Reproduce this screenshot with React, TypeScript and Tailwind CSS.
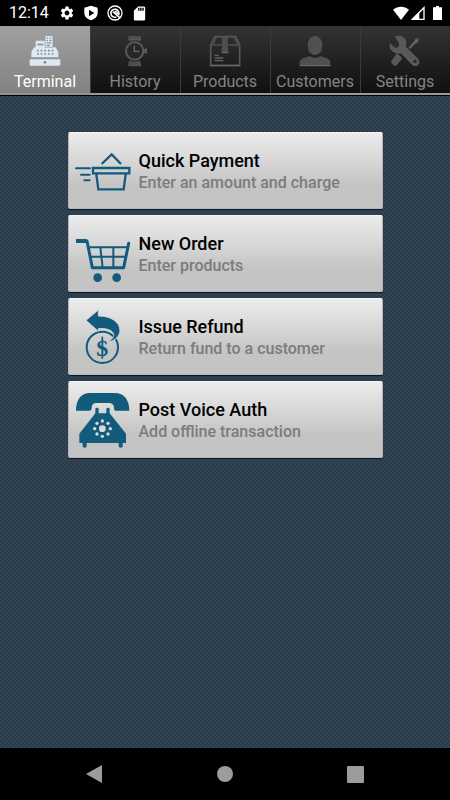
import { useState } from 'react';
import type { ReactNode } from 'react';
import { MdSdCard, MdSettings } from 'react-icons/md';

const TABS: { label: string; icon: ReactNode }[] = [
  { label: 'Terminal', icon: <RegisterIcon /> },
  { label: 'History', icon: <WatchIcon /> },
  { label: 'Products', icon: <BoxIcon /> },
  { label: 'Customers', icon: <PersonIcon /> },
  { label: 'Settings', icon: <ToolsIcon /> },
];

const ACTIONS: { title: string; text: string; icon: ReactNode }[] = [
  { title: 'Quick Payment', text: 'Enter an amount and charge', icon: <BasketIcon /> },
  { title: 'New Order', text: 'Enter products', icon: <CartIcon /> },
  { title: 'Issue Refund', text: 'Return fund to a customer', icon: <RefundIcon /> },
  { title: 'Post Voice Auth', text: 'Add offline transaction', icon: <PhoneIcon /> },
];

function RegisterIcon() {
  return (
    <svg viewBox="87 105 96 96" className="size-8 shrink-0" aria-hidden="true">
      <g fill="#dce8f3">
        <path d="M107 122h50v20h10l8 14v16H94v-16l8-14h5z" />
        <rect x="135" y="107" width="24" height="35" rx="2" stroke="#8e959b" strokeWidth="2" />
        <rect x="89" y="178" width="92" height="19" rx="3" />
      </g>
      <path d="M112 131h18v5h-18z" fill="#8b8f93" />
      <path d="M140 115h4m4 0h6M140 122h4m4 0h6M140 129h14M140 136h10" stroke="#7b8288" strokeWidth="3" />
      <path d="M111 152h49M111 162h49" stroke="#858b90" strokeWidth="5" strokeDasharray="5 6" />
      <circle cx="135" cy="187" r="4" fill="#7e858b" />
    </svg>
  );
}

function WatchIcon() {
  return (
    <svg viewBox="357 105 96 96" className="size-8 shrink-0" aria-hidden="true">
      <path d="M385 108h38v8l-4 9c-9-5-21-5-30 0l-4-9zM385 197h38v-8l-4-8c-9 5-21 5-30 0l-4 8z" fill="#4d4d4d" />
      <path d="M385 118h38M385 197h38" stroke="#656565" strokeWidth="2" />
      <circle cx="404" cy="153" r="26" fill="#262626" stroke="#5a5a5a" strokeWidth="6" />
      <path d="M431 147h6v-2h4v16h-4v-2h-6z" fill="#5a5a5a" />
      <path d="M403 137v17h15" fill="none" stroke="#6c6c6c" strokeWidth="4" />
    </svg>
  );
}

function BoxIcon() {
  return (
    <svg viewBox="327 21 96 96" className="size-8 shrink-0" aria-hidden="true">
      <path d="M332 112V51l13-25h62l12 25v61z" fill="none" stroke="#575757" strokeWidth="5" />
      <path d="M332 51h33M385 51h34M348 27l-8 22M403 27l9 22" stroke="#505050" strokeWidth="4" />
      <path d="M366 26h17l2 49h-20z" fill="#4e4e4e" />
      <path d="M365 74h20M332 113h87" stroke="#707070" strokeWidth="3" />
      <path d="M344 82h12M344 90h26M344 98h26" stroke="#636363" strokeWidth="4" />
    </svg>
  );
}

function PersonIcon() {
  return (
    <svg viewBox="222 105 96 96" className="size-8 shrink-0" aria-hidden="true">
      <ellipse cx="270" cy="135" rx="22" ry="28" fill="#505050" />
      <path d="M224 197v-11c1-8 8-11 20-14l10-4c10 7 22 7 32 0l10 4c12 3 19 6 20 14v11z" fill="#505050" />
      <path d="M224 197h92" stroke="#727272" strokeWidth="3" />
      <path d="M250 149c8 19 32 19 40 0" fill="none" stroke="#686868" strokeWidth="2" />
    </svg>
  );
}

function ToolsIcon() {
  return (
    <svg viewBox="492 105 96 96" className="size-8 shrink-0" aria-hidden="true">
      <path d="M550 143l17-19 3-6 9-4 3 6-5 8-7 4-15 16z" fill="#606060" />
      <path d="M516 159l16 16-17 21c-5 5-20-6-16-13z" fill="#585858" />
      <path
        d="M510 111c9-7 29-4 33 12 1 7 0 12 0 17l35 35c12 13-3 30-16 19l-35-36c-12 3-25 0-31-12-3-6-3-12-1-17l13 13c8 4 17-4 14-13z"
        fill="#585858"
      />
      <path d="M497 142c8 16 22 18 32 16l34 35c9 7 19 2 20-7" fill="none" stroke="#6d6d6d" strokeWidth="2" />
      <circle cx="570" cy="184" r="5" fill="#252525" />
    </svg>
  );
}

function BasketIcon() {
  return (
    <svg viewBox="45 51 168 168" className="size-14 shrink-0" fill="none" stroke="#125b7c" strokeWidth="7" aria-hidden="true">
      <path d="M125 114l30-29 28 29" />
      <path d="M99 126h109v16H99zM109 145l6 45h76l6-45" />
      <path d="M48 127h42M63 146h26M73 163h16" strokeWidth="6" strokeLinecap="round" />
    </svg>
  );
}

function CartIcon() {
  return (
    <svg viewBox="45 45 168 168" className="size-14 shrink-0" aria-hidden="true">
      <g fill="none" stroke="#125b7c">
        <path d="M52 90h29l16 80h94l15-73" strokeWidth="9" strokeLinecap="round" strokeLinejoin="round" />
        <path d="M48 90h32" strokeWidth="12" />
        <path d="M86 109h116M92 137h104M121 109l7 61M160 109v61" strokeWidth="6" />
      </g>
      <circle cx="113" cy="200" r="13" fill="#125b7c" />
      <circle cx="170" cy="200" r="13" fill="#125b7c" />
    </svg>
  );
}

function RefundIcon() {
  return (
    <svg viewBox="45 48 168 168" className="size-14 shrink-0" aria-hidden="true">
      <circle cx="127" cy="163" r="47" fill="none" stroke="#125b7c" strokeWidth="6" />
      <path
        d="M78 82l37-31v18c37 0 64 17 65 43 0 18-17 33-37 35 12-7 19-15 18-22-2-14-23-20-46-18v8z"
        fill="#125b7c"
        stroke="#d2d2d2"
        strokeWidth="3"
      />
      <text x="127" y="188" textAnchor="middle" className="font-['Liberation_Serif',serif] text-[72px] font-bold" fill="#125b7c">$</text>
      <path d="M127 131v66" stroke="#125b7c" strokeWidth="5" />
    </svg>
  );
}

function PhoneIcon() {
  const holes = [[127, 135], [144, 142], [151, 158], [144, 174], [127, 181], [111, 174], [104, 158], [111, 142]];
  return (
    <svg viewBox="45 48 168 168" className="size-14 shrink-0" aria-hidden="true">
      <g fill="#125b7c">
        <path d="M48 104c0-32 14-53 43-53h73c29 0 44 21 44 53h-40c-5 0-6-4-6-9 0-9-6-14-15-14h-38c-9 0-14 5-14 14 0 5-2 9-7 9z" />
        <path d="M106 99q0-4 5-4t5 4v13h23V99q0-4 5-4t5 4v13l49 61v28h-10v10q0 4-6 4t-6-4v-10H80v10q0 4-6 4t-6-4v-10H58v-28l48-61z" />
      </g>
      <g fill="#dadada">
        <circle cx="127" cy="158" r="10" />
        {holes.map(([x, y]) => <circle key={`${x}-${y}`} cx={x} cy={y} r="5" />)}
      </g>
    </svg>
  );
}

function StatusBar() {
  return (
    <header className="flex h-[26px] items-center bg-black pr-2 pl-[9px] text-white">
      <span className="w-[50px] text-base leading-none">12:14</span>
      <div className="flex flex-1 items-center gap-2">
        <MdSettings size={16} />
        <svg viewBox="2 0 20 24" className="h-4 w-4" aria-hidden="true">
          <path fillRule="evenodd" d="M12 1L2 4v8c0 5 4 9 10 11 6-2 10-6 10-11V4zM9 7l8 5-8 5z" fill="currentColor" />
        </svg>
        <svg viewBox="0 0 48 48" className="size-4" fill="none" stroke="currentColor" aria-hidden="true">
          <circle cx="24" cy="24" r="21" strokeWidth="4" />
          <path d="M34 31a12 12 0 1 0-6 5" strokeWidth="5" />
          <path d="M18 20l20 18M24 18l10 9" strokeWidth="5" />
        </svg>
        <MdSdCard size={17} />
      </div>
      <div className="flex items-center gap-[2px]">
        <svg viewBox="0 0 48 42" className="h-[14px] w-4" fill="currentColor" aria-hidden="true">
          <path d="M24 42L0 11c14-12 34-12 48 0z" />
        </svg>
        <svg viewBox="0 0 42 42" className="size-[14px]" aria-hidden="true">
          <path d="M4 40L39 5v35z" fill="none" stroke="currentColor" strokeWidth="4" />
          <path d="M4 40l21-21v21z" fill="currentColor" />
        </svg>
        <svg viewBox="0 0 27 42" className="ml-[6px] h-[14px] w-[9px]" fill="currentColor" aria-hidden="true">
          <path d="M9 0h9v4h9v38H0V4h9z" />
        </svg>
      </div>
    </header>
  );
}

export default function App() {
  const [active, setActive] = useState('Terminal');

  return (
    <div className="flex min-h-screen flex-col bg-black font-[Roboto,sans-serif]">
      <StatusBar />

      <nav className="grid grid-cols-5 border-b border-black bg-[#999]">
        {TABS.map(tab => (
          <button
            key={tab.label}
            onClick={() => setActive(tab.label)}
            className={`flex h-[69px] flex-col items-center border-b-2 pt-[9px] ${
              tab.label === active
                ? 'border-b-[#929292] bg-linear-to-b from-[#a0a0a0] to-[#828282] text-white'
                : 'border-b-[#999] bg-linear-to-b from-[#343434] to-[#101010] text-[#858585] shadow-[inset_1px_0_#3a3a3a]'
            }`}
          >
            {tab.icon}
            <span className="mt-[5px] text-base leading-5">{tab.label}</span>
          </button>
        ))}
      </nav>

      <main className="flex flex-1 flex-col items-center gap-[6px] bg-[#2c3e4e] bg-[conic-gradient(#ffffff08_25%,#0000000c_0_50%,#ffffff08_0_75%,#0000000c_0)] bg-size-[4px_4px] pt-9">
        {ACTIONS.map(a => (
          <button
            key={a.title}
            className="flex h-[77px] w-[70%] items-center gap-2 rounded-[2px] border border-[#b5b8ba] border-t-[#f5f5f5] bg-linear-to-b from-[#ececec] via-[#d0d0d0] via-50% to-[#c4c4c4] to-70% pl-[6px] text-left shadow-[0_1px_1px_#0b1628]"
          >
            {a.icon}
            <span className="flex flex-col">
              <span className="text-lg leading-6 font-medium text-black">{a.title}</span>
              <span className="text-base leading-5 font-medium text-[#7c7c7c]">{a.text}</span>
            </span>
          </button>
        ))}
      </main>

      <footer className="grid h-[52px] grid-cols-[1fr_70px_1fr] items-center bg-black px-[86px] text-[#9c9c9c]">
        <button aria-label="Back" className="justify-self-start">
          <svg viewBox="0 0 17 18" className="h-[18px] w-[17px]" fill="currentColor"><path d="M0 9L16 0v18z" /></svg>
        </button>
        <button aria-label="Home" className="justify-self-center">
          <svg viewBox="0 0 16 16" className="size-4" fill="currentColor"><circle cx="8" cy="8" r="8" /></svg>
        </button>
        <button aria-label="Recent apps" className="justify-self-end">
          <svg viewBox="0 0 17 17" className="size-[17px]" fill="currentColor"><rect width="17" height="17" rx="1" /></svg>
        </button>
      </footer>
    </div>
  );
}
